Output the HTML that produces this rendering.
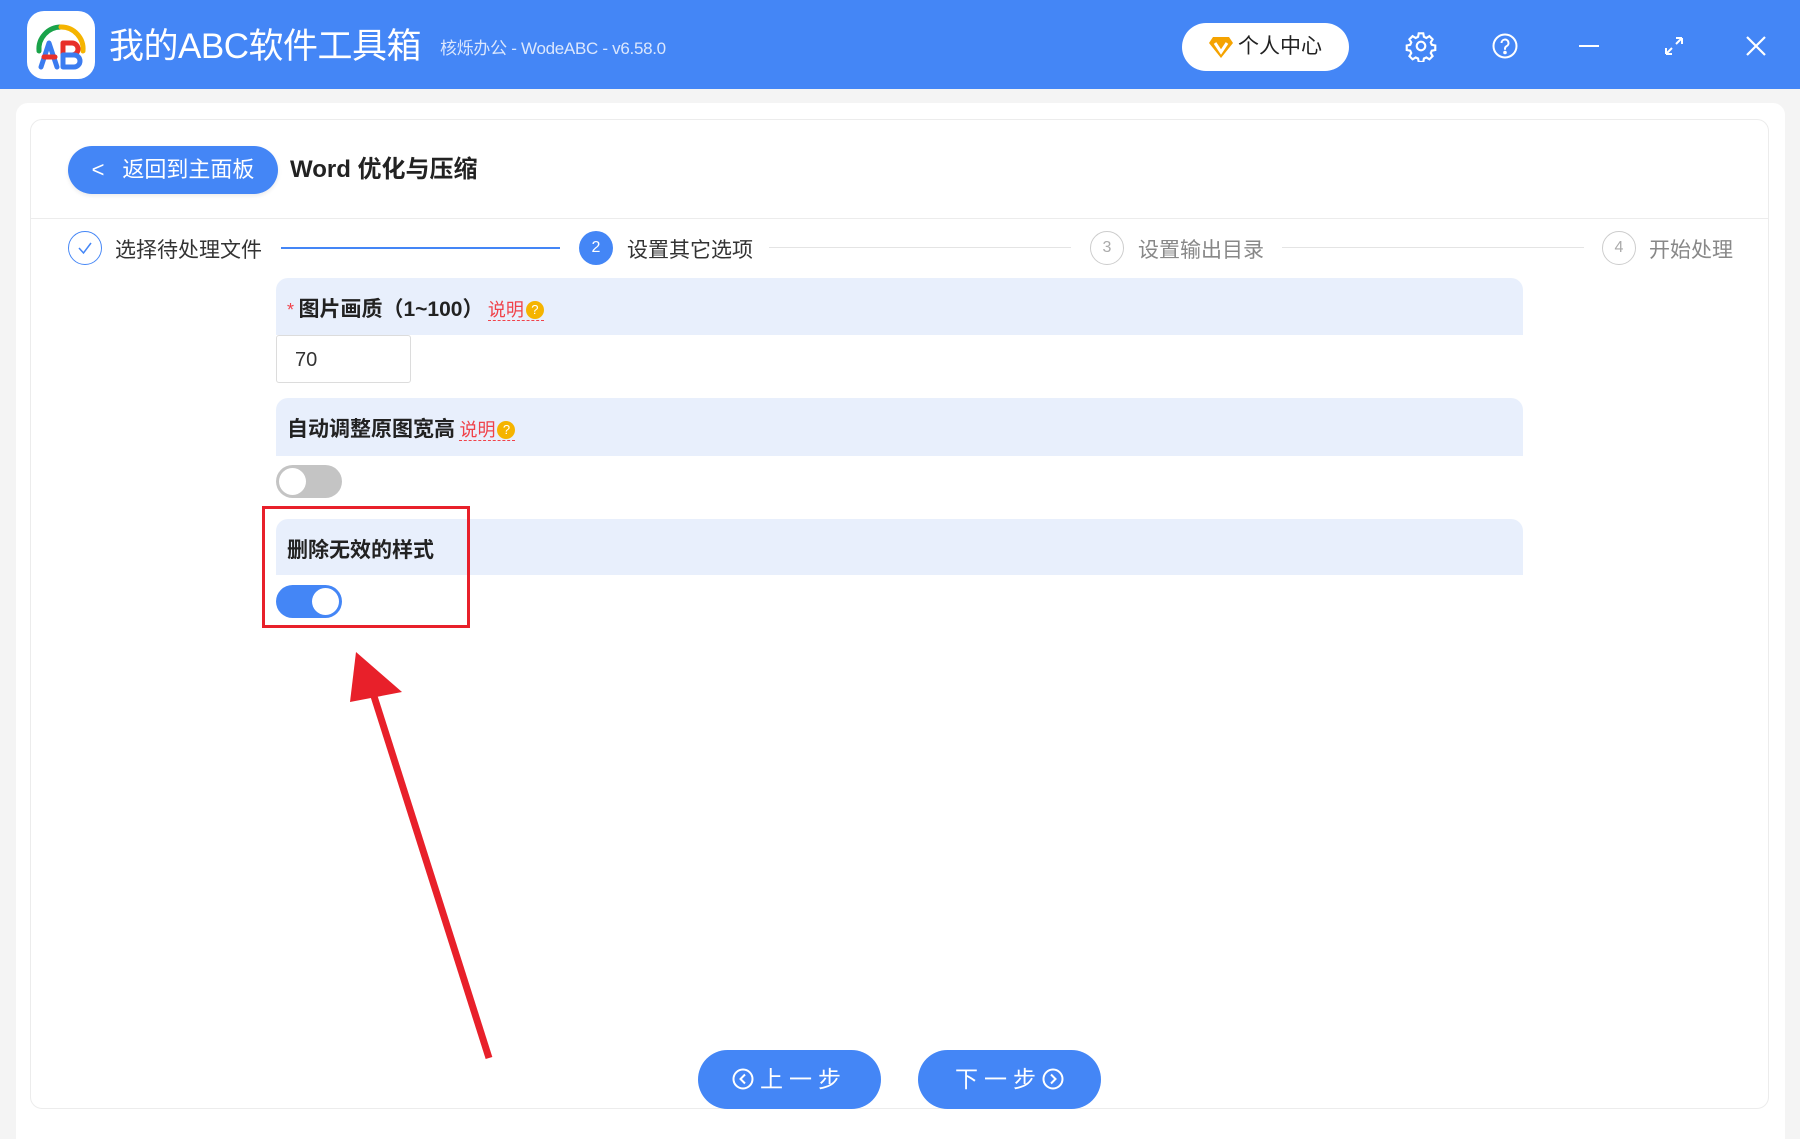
<!DOCTYPE html>
<html><head><meta charset="utf-8"><style>
*{margin:0;padding:0;box-sizing:border-box}
body{width:1800px;height:1139px;background:#f4f4f4;font-family:"Liberation Sans","Noto Sans CJK SC",sans-serif;position:relative;overflow:hidden}
.abs{position:absolute}
.hdr{left:0;top:0;width:1800px;height:89px;background:#4486f6}
.t{white-space:nowrap}
.panel{left:276px;width:1247px;background:#e8effc;border-radius:12px 12px 0 0}
.lbl{font-weight:bold;font-size:21px;color:#222}
.sm{color:#f0424a;font-size:18px;border-bottom:1.5px dashed #f0424a;line-height:22px}
.q{display:inline-block;width:18px;height:18px;border-radius:50%;background:#f5b400;color:#fff;font-size:13px;text-align:center;line-height:18px;vertical-align:2px;margin-left:2px}
.tog{width:66px;height:33px;border-radius:17px}
.knob{position:absolute;top:3px;width:27px;height:27px;border-radius:50%;background:#fff}
.circ{width:34px;height:34px;border-radius:50%;text-align:center;line-height:32px;font-size:16px}
.st{font-size:21px}
.btn{background:#4486f6;color:#fff;border-radius:30px;text-align:center}
</style></head><body>
<div class="abs hdr"></div>
<div class="abs" style="left:27px;top:11px;width:68px;height:68px;background:#fff;border-radius:17px">
<svg width="68" height="68" viewBox="0 0 68 68">
<path d="M12 40 A22 22 0 0 1 34 16" stroke="#1aa34a" stroke-width="5" fill="none" stroke-linecap="round"/>
<path d="M34 16 A22 22 0 0 1 56 40" stroke="#f5b400" stroke-width="5" fill="none" stroke-linecap="round"/>
<path d="M14 56 L22 32 L30 56" stroke="#3b7cf0" stroke-width="5" fill="none" stroke-linecap="round" stroke-linejoin="round"/>
<path d="M17 46 H28" stroke="#e8302a" stroke-width="5" stroke-linecap="round"/>
<path d="M36 32 H45 a6 6 0 0 1 0 12 H36 Z" stroke="#e8302a" stroke-width="5" fill="none" stroke-linejoin="round"/>
<path d="M36 44 H47 a6 6 0 0 1 0 12 H36 Z" stroke="#3b7cf0" stroke-width="5" fill="none" stroke-linejoin="round"/>
</svg></div>
<div class="abs t" style="left:109px;top:25px;font-size:35px;color:#fff;line-height:44px;letter-spacing:-0.5px">我的ABC软件工具箱</div>
<div class="abs t" style="left:440px;top:38px;font-size:17px;color:#dbe7fd;line-height:22px;letter-spacing:-0.3px">核烁办公 - WodeABC - v6.58.0</div>
<div class="abs" style="left:1182px;top:23px;width:167px;height:48px;background:#fff;border-radius:24px"></div>
<svg class="abs" style="left:1207px;top:33px" width="28" height="28" viewBox="0 0 28 28"><path d="M6 4 H22 L26 10 L14 25 L2 10 Z" fill="#f5a300"/><path d="M8 10 L14 19 L20 10" stroke="#fff" stroke-width="3" fill="none"/></svg>
<div class="abs t" style="left:1238px;top:33px;font-size:21px;color:#222;line-height:28px">个人中心</div>
<svg class="abs" style="left:1405px;top:30px" width="32" height="32" viewBox="0 0 24 24" fill="none" stroke="#fff" stroke-width="1.6"><circle cx="12" cy="12" r="3.2"/><path d="M10.3 2.5h3.4l.5 2.6 1.8.9 2.3-1.4 2.4 2.4-1.4 2.3.8 1.8 2.6.5v3.4l-2.6.5-.8 1.8 1.4 2.3-2.4 2.4-2.3-1.4-1.8.8-.5 2.6h-3.4l-.5-2.6-1.8-.8-2.3 1.4-2.4-2.4 1.4-2.3-.8-1.8-2.6-.5v-3.4l2.6-.5.8-1.8-1.4-2.3 2.4-2.4 2.3 1.4 1.8-.9z"/></svg>
<svg class="abs" style="left:1490px;top:31px" width="30" height="30" viewBox="0 0 30 30" fill="none" stroke="#fff" stroke-width="2"><circle cx="15" cy="15" r="11.5"/><path d="M11.5 12a3.5 3.5 0 1 1 5 3.2c-1 .6-1.5 1.2-1.5 2.5v1"/><circle cx="15" cy="21.5" r="0.8" fill="#fff"/></svg>
<div class="abs" style="left:1579px;top:45px;width:20px;height:2px;background:#fff"></div>
<svg class="abs" style="left:1662px;top:34px" width="24" height="24" viewBox="0 0 24 24" fill="none" stroke="#fff" stroke-width="2"><path d="M4 20 L10 14 M14 10 L20 4 M4 20 v-6 M4 20 h6 M20 4 v6 M20 4 h-6" stroke-width="2"/></svg>
<svg class="abs" style="left:1746px;top:36px" width="20" height="20" viewBox="0 0 20 20" stroke="#fff" stroke-width="2.2"><path d="M1 1 L19 19 M19 1 L1 19"/></svg>

<div class="abs" style="left:16px;top:103px;width:1769px;height:1036px;background:#fff;border-radius:12px 12px 0 0"></div>
<div class="abs" style="left:30px;top:119px;width:1739px;height:990px;border:1px solid #ececec;border-radius:12px;background:#fff"></div>
<div class="abs btn t" style="left:68px;top:146px;width:210px;height:48px;line-height:48px;font-size:22px;box-shadow:0 2px 4px rgba(0,0,0,.08)"><span style="margin-right:18px;font-size:22px">&lt;</span>返回到主面板</div>
<div class="abs t" style="left:290px;top:155px;font-size:24px;font-weight:bold;color:#222;line-height:30px">Word 优化与压缩</div>
<div class="abs" style="left:31px;top:218px;width:1737px;height:1px;background:#ececec"></div>

<div class="abs circ" style="left:68px;top:231px;border:1.5px solid #4486f6;color:#4486f6">
<svg width="20" height="20" viewBox="0 0 20 20" style="margin-top:6px" fill="none" stroke="#4486f6" stroke-width="1.5"><path d="M4 10 L8.5 15 L16 5"/></svg></div>
<div class="abs t st" style="left:115px;top:234px;color:#333">选择待处理文件</div>
<div class="abs" style="left:281px;top:247px;width:279px;height:1.5px;background:#4486f6"></div>
<div class="abs circ" style="left:579px;top:231px;background:#4486f6;color:#fff;line-height:34px">2</div>
<div class="abs t st" style="left:627px;top:234px;color:#333">设置其它选项</div>
<div class="abs" style="left:769px;top:247px;width:302px;height:1px;background:#e4e4e4"></div>
<div class="abs circ" style="left:1090px;top:231px;border:1.5px solid #ccc;color:#aaa">3</div>
<div class="abs t st" style="left:1138px;top:234px;color:#888">设置输出目录</div>
<div class="abs" style="left:1282px;top:247px;width:302px;height:1px;background:#e4e4e4"></div>
<div class="abs circ" style="left:1602px;top:231px;border:1.5px solid #ccc;color:#aaa">4</div>
<div class="abs t st" style="left:1649px;top:234px;color:#888">开始处理</div>

<div class="abs panel" style="top:278px;height:57px"></div>
<div class="abs t" style="left:287px;top:293px"><span style="color:#f0424a;font-size:18px">*</span> <span class="lbl">图片画质（1~100）</span> <span class="sm">说明<span class="q">?</span></span></div>
<div class="abs" style="left:276px;top:335px;width:135px;height:48px;border:1px solid #dcdcdc;border-radius:3px;font-size:20px;color:#333;padding:13px 18px;line-height:22px">70</div>

<div class="abs panel" style="top:398px;height:58px"></div>
<div class="abs t" style="left:287px;top:413px"><span class="lbl">自动调整原图宽高</span> <span class="sm">说明<span class="q">?</span></span></div>
<div class="abs tog" style="left:276px;top:465px;background:#c4c4c4"><div class="knob" style="left:3px"></div></div>

<div class="abs panel" style="top:519px;height:56px"></div>
<div class="abs t lbl" style="left:287px;top:534px">删除无效的样式</div>
<div class="abs tog" style="left:276px;top:585px;background:#4486f6"><div class="knob" style="left:36px"></div></div>
<div class="abs" style="left:262px;top:506px;width:208px;height:122px;border:3px solid #e8202a"></div>

<svg class="abs" style="left:0;top:0" width="1800" height="1139"><path d="M489 1058 L372 690" stroke="#e8202a" stroke-width="7"/><path d="M356 652 L350 702 L402 692 Z" fill="#e8202a"/></svg>

<div class="abs btn t" style="left:698px;top:1050px;width:183px;height:59px;line-height:59px;font-size:23px;letter-spacing:6px"><svg width="22" height="22" viewBox="0 0 22 22" style="vertical-align:-3px;margin-right:6px" fill="none" stroke="#fff" stroke-width="2"><circle cx="11" cy="11" r="9.5"/><path d="M13 6.5 L8.5 11 L13 15.5"/></svg>上一步</div>
<div class="abs btn t" style="left:918px;top:1050px;width:183px;height:59px;line-height:59px;font-size:23px;letter-spacing:6px">下一步<svg width="22" height="22" viewBox="0 0 22 22" style="vertical-align:-3px" fill="none" stroke="#fff" stroke-width="2"><circle cx="11" cy="11" r="9.5"/><path d="M9 6.5 L13.5 11 L9 15.5"/></svg></div>
</body></html>
